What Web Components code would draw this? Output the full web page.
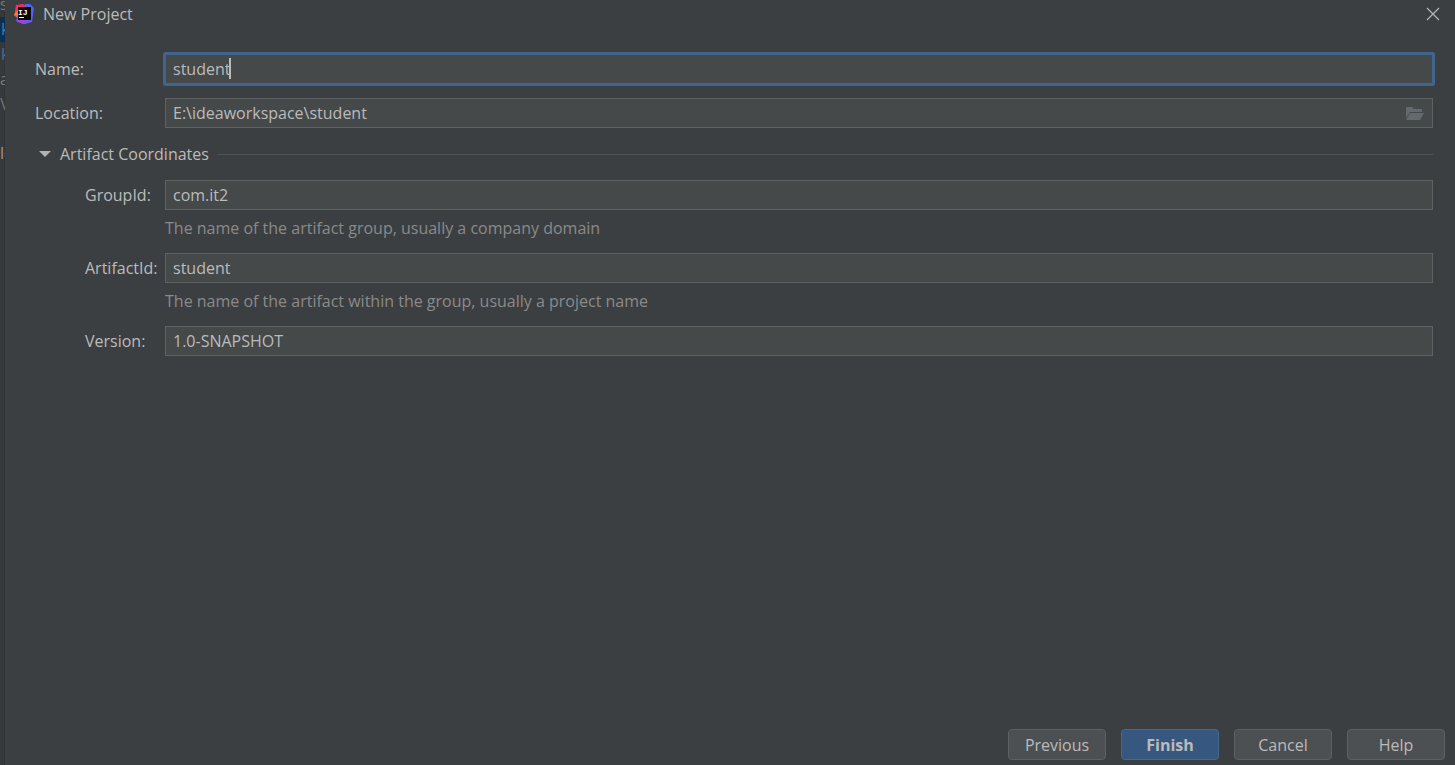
<!DOCTYPE html>
<html lang="en">
<head>
<meta charset="utf-8">
<title>New Project</title>
<style>
  html, body { height: 100%; }
  body { margin: 0; background: #3c3f41; color: #bbbbbb; font: 16px/24px "Open Sans", "Noto Sans", sans-serif; }
</style>
</head>
<body>
<new-project-window></new-project-window>
<script>
const define = (name, html, setup) => {
  const template = document.createElement('template');
  template.innerHTML = html;
  customElements.define(name, class extends HTMLElement {
    connectedCallback() {
      if (this.shadowRoot) return;
      this.attachShadow({ mode: 'open' }).append(template.content.cloneNode(true));
      if (setup) setup(this, this.shadowRoot);
    }
  });
};

define('editor-edge', `
  <style>
    :host { display: block; overflow: hidden; background: #36393b; box-shadow: inset -1px 0 #323537; color: #77797b; line-height: 25px; }
    div { box-sizing: border-box; height: 25px; white-space: nowrap; }
    .first { height: 17px; line-height: 9px; }
    .on, .link { padding-left: 1px; }
    .on { background: #0d3050; color: #3f7cae; }
    .link { color: #45708f; }
    .last { margin-top: 24px; color: #a89572; }
    .last span { color: #5b7f9c; }
  </style>
  <div class="first">s</div><div class="on">k</div><div class="link">k</div><div>a</div><div>\\</div><div class="last">l<span>e</span></div>`);

define('app-logo', `
  <style>:host { display: block; width: 20px; height: 20px; } svg { display: block; }</style>
  <svg width="20" height="20" viewBox="0 0 20 20" aria-hidden="true">
    <defs>
      <linearGradient id="b" x1="0" y1="0" x2="1" y2="1"><stop offset="0" stop-color="#6b57ff"/><stop offset=".5" stop-color="#3a6cf5"/><stop offset="1" stop-color="#7a4ff0"/></linearGradient>
      <linearGradient id="r" x1="0" y1="0" x2="1" y2="0"><stop offset="0" stop-color="#f92d5c"/><stop offset="1" stop-color="#e5316f"/></linearGradient>
      <linearGradient id="o" x1="0" y1="0" x2="0" y2="1"><stop offset="0" stop-color="#f5385a"/><stop offset=".5" stop-color="#fc8a1d"/><stop offset="1" stop-color="#b43ad0"/></linearGradient>
    </defs>
    <path d="M11 0 16 0 20 4 18 18 11 20 3 18 8 10z" fill="url(#b)"/>
    <path d="M2 1 9 0 13 3 12 9 3 9 1 7z" fill="url(#r)"/>
    <path d="M2 6 7 7 6 14 3 14 0 11z" fill="url(#o)"/>
    <path d="M3 14 10 15 13 19 9 20 2 17z" fill="#a044d8"/>
    <path d="M4 3h13v13H4z" fill="#080808"/>
    <text x="4" y="11" fill="#fff" font-family="Liberation Mono, monospace" font-size="8" font-weight="700">IJ</text>
    <path d="M5 13h5v1H5z" fill="#fff"/>
  </svg>`);

define('title-bar', `
  <style>
    :host { display: flex; align-items: center; height: 28px; padding: 0 14px 0 9px; }
    h1 { flex: 1; margin: 0 0 0 9px; font: inherit; }
    button { display: grid; place-items: center; width: 16px; height: 16px; padding: 0; border: 0; background: none; color: #b4b5b6; }
  </style>
  <app-logo></app-logo><h1><slot></slot></h1>
  <button type="button" aria-label="Close"><svg width="14" height="14" viewBox="0 0 14 14" aria-hidden="true"><path d="M1 1 13 13M13 1 1 13" fill="none" stroke="currentColor" stroke-width="1.2"/></svg></button>`);

define('form-field', `
  <style>
    :host { display: grid; grid-template-columns: 130px minmax(0, 1fr); align-items: center; }
    :host([nested]) { grid-template-columns: 80px minmax(0, 1fr); }
    .box { position: relative; display: flex; align-items: center; box-sizing: border-box; height: 30px; border: 1px solid #5f6263; background: #45494a; }
    :host([active]) .box { border-color: #40668f; box-shadow: 0 0 0 2px #40668f; border-radius: 1px; }
    input { flex: 1; min-width: 0; box-sizing: border-box; height: 28px; padding: 0 7px; border: 0; outline: 0; background: none; color: inherit; font: inherit; caret-color: transparent; }
    .caret { position: absolute; top: 3px; width: 2px; height: 21px; background: #bbbbbb; }
    p { grid-column: 2; margin: 7px 0 0; height: 22px; line-height: 22px; color: #8a8a8a; }
    ::slotted(*) { margin-right: 7px; }
  </style>
  <label for="field"></label>
  <div class="box"><input id="field" type="text" spellcheck="false"><slot></slot></div>`,
  (host, root) => {
    const input = root.querySelector('input');
    root.querySelector('label').textContent = host.getAttribute('label');
    input.value = host.getAttribute('value');
    if (host.hasAttribute('hint')) {
      const hint = document.createElement('p');
      hint.id = 'hint';
      hint.textContent = host.getAttribute('hint');
      input.setAttribute('aria-describedby', 'hint');
      root.append(hint);
    }
    if (host.hasAttribute('active')) {
      const ctx = document.createElement('canvas').getContext('2d');
      const style = getComputedStyle(input);
      ctx.font = style.fontSize + ' ' + style.fontFamily;
      const caret = document.createElement('span');
      caret.className = 'caret';
      caret.style.left = Math.round(parseFloat(style.paddingLeft) + ctx.measureText(input.value).width) - 1 + 'px';
      root.querySelector('.box').append(caret);
    }
  });

define('browse-button', `
  <style>
    :host { display: block; }
    button { display: block; padding: 0; border: 0; background: none; color: #636a6e; }
    svg { display: block; }
  </style>
  <button type="button" aria-label="Browse"><svg width="20" height="16" viewBox="0 0 20 16" aria-hidden="true"><path d="M1 2h6l2 2h8v3H5L1 13z" fill="currentColor"/><path d="M5 8h14l-4 7H1z" fill="currentColor"/></svg></button>`);

define('field-section', `
  <style>
    :host { display: block; }
    button { display: flex; align-items: center; width: 100%; height: 24px; padding: 0 0 0 4px; border: 0; background: none; color: inherit; font: inherit; text-align: left; }
    button svg { margin-right: 9px; }
    button::after { content: ""; flex: 1; height: 1px; margin-left: 8px; background: #505355; }
    .body { display: grid; gap: 14px; padding: 14px 0 0 50px; }
  </style>
  <button type="button" aria-expanded="true"><svg width="12" height="8" viewBox="0 0 12 8" aria-hidden="true"><path d="M0 1h12L6 7z" fill="#b0b2b3"/></svg><span></span></button>
  <div class="body"><slot></slot></div>`,
  (host, root) => { root.querySelector('span').textContent = host.getAttribute('heading'); });

define('dialog-button', `
  <style>
    :host { display: block; }
    button { box-sizing: border-box; width: 98px; height: 31px; padding: 0; border: 1px solid #5e6162; border-radius: 4px; background: #4c5052; color: inherit; font: inherit; }
    :host([primary]) button { background: #365880; border-color: #456a90; font-weight: 700; }
  </style>
  <button type="button"><slot></slot></button>`);

define('new-project-window', `
  <style>
    :host { display: grid; grid-template-columns: 5px minmax(0, 1fr); min-height: 100vh; }
    main { display: flex; flex-direction: column; }
    form { flex: 1; display: grid; align-content: start; gap: 14px; padding: 26px 22px 0 30px; }
    footer { display: flex; justify-content: flex-end; gap: 15px; padding: 0 10px 5px; }
  </style>
  <editor-edge></editor-edge>
  <main>
    <title-bar>New Project</title-bar>
    <form>
      <form-field label="Name:" value="student" active></form-field>
      <form-field label="Location:" value="E:\\ideaworkspace\\student"><browse-button></browse-button></form-field>
      <field-section heading="Artifact Coordinates">
        <form-field nested label="GroupId:" value="com.it2" hint="The name of the artifact group, usually a company domain"></form-field>
        <form-field nested label="ArtifactId:" value="student" hint="The name of the artifact within the group, usually a project name"></form-field>
        <form-field nested label="Version:" value="1.0-SNAPSHOT"></form-field>
      </field-section>
    </form>
    <footer>
      <dialog-button>Previous</dialog-button>
      <dialog-button primary>Finish</dialog-button>
      <dialog-button>Cancel</dialog-button>
      <dialog-button>Help</dialog-button>
    </footer>
  </main>`);
</script>
</body>
</html>
